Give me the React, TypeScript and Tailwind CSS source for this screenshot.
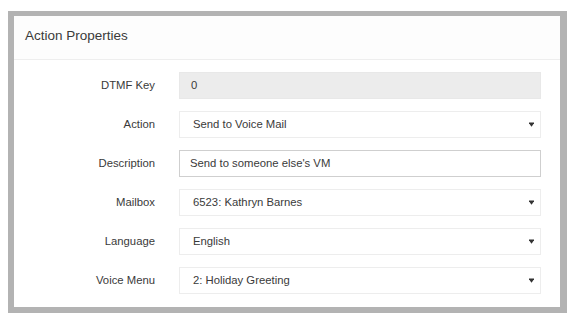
import React from 'react';

type Row = {
  label: string;
  value: string;
  kind: 'readonly' | 'select' | 'text';
};

const rows: Row[] = [
  { label: 'DTMF Key', value: '0', kind: 'readonly' },
  { label: 'Action', value: 'Send to Voice Mail', kind: 'select' },
  { label: 'Description', value: "Send to someone else's VM", kind: 'text' },
  { label: 'Mailbox', value: '6523: Kathryn Barnes', kind: 'select' },
  { label: 'Language', value: 'English', kind: 'select' },
  { label: 'Voice Menu', value: '2: Holiday Greeting', kind: 'select' }
];

const Caret = () => (
  <svg width="5" height="5" viewBox="0 0 5 5" className="shrink-0">
    <path d="M0 0.5 H5 V1.3 L2.5 4.8 L0 1.3 Z" fill="#333" />
  </svg>
);

const Field: React.FC<{ row: Row }> = ({ row }) => {
  if (row.kind === 'readonly') {
    return (
      <div className="h-[27px] w-[362px] flex items-center pl-[11px] bg-[#ececec] border border-[#e8e8e8] text-[11.3px] text-[#3a3a3a]">
        {row.value}
      </div>
    );
  }
  if (row.kind === 'text') {
    return (
      <div className="h-[27px] w-[362px] flex items-center pl-[10px] bg-white border border-[#cfcfcf] text-[11.3px] text-[#3a3a3a]">
        {row.value}
      </div>
    );
  }
  return (
    <div className="h-[27px] w-[362px] flex items-center justify-between pl-[13px] pr-[6px] bg-white border border-[#ededed] text-[11.3px] text-[#3a3a3a]">
      <span>{row.value}</span>
      <Caret />
    </div>
  );
};

export default function App() {
  return (
    <div className="w-[574px] h-[316px] bg-white pt-[11px] pl-[8px] font-['Liberation_Sans',Arial,sans-serif]">
      <div className="w-[559px] h-[302px] border-t-[5px] border-l-[6px] border-r-[7px] border-b-[6px] border-[#b3b3b3] bg-white flex flex-col">
        <div className="h-[44px] shrink-0 flex items-center pl-[11px] pb-[2px] bg-[#fdfdfd] border-b border-[#eeeeee] text-[13.5px] text-[#3a3a3a]">
          Action Properties
        </div>
        <div className="flex flex-col gap-[12px] pt-[12px]">
          {rows.map((row) => (
            <div key={row.label} className="flex items-center">
              <div className="w-[141px] text-right text-[11.3px] text-[#3a3a3a]">{row.label}</div>
              <div className="ml-[24px]">
                <Field row={row} />
              </div>
            </div>
          ))}
        </div>
      </div>
    </div>
  );
}
